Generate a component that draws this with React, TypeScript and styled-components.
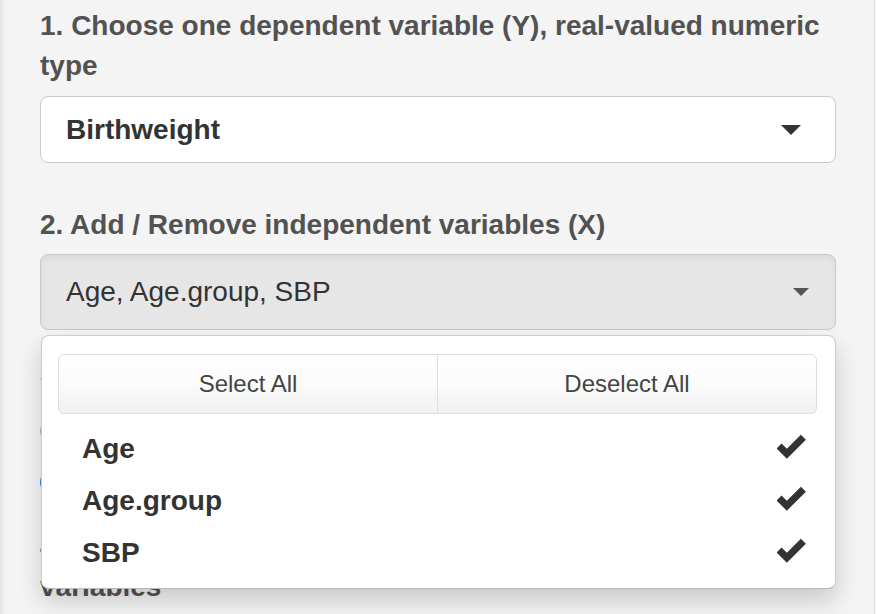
import React from "react";
import styled, { createGlobalStyle } from "styled-components";

const Global = createGlobalStyle`
  html, body { margin: 0; padding: 0; background: #f5f5f5; }
  body { font-family: "Liberation Sans", Arial, Helvetica, sans-serif; }
  * { box-sizing: border-box; }
`;

const Well = styled.div`
  width: 875px;
  height: 614px;
  overflow: hidden;
  background: #f4f4f4;
  border-left: 2px solid #e7e7e7;
  border-right: 1px solid #e2e2e2;
  box-shadow: inset 4px 0 4px -2px rgba(0, 0, 0, 0.04);
  padding: 6px 38px 0 38px;
`;

const FormGroup = styled.div<{ $mb: number }>`
  margin-bottom: ${(p) => p.$mb}px;
  position: relative;
`;

const Label = styled.div<{ $mb?: number }>`
  font-size: 28px;
  line-height: 40px;
  font-weight: 700;
  color: #525252;
  margin-bottom: ${(p) => p.$mb ?? 10}px;
`;

const SelectButton = styled.div<{ $open?: boolean; $h: number }>`
  height: ${(p) => p.$h}px;
  display: flex;
  align-items: center;
  justify-content: space-between;
  padding: 0 26px 0 25px;
  border: 1px solid ${(p) => (p.$open ? "#cacaca" : "#cbcbcb")};
  border-radius: 8px;
  background: ${(p) => (p.$open ? "#e6e6e6" : "#ffffff")};
  box-shadow: ${(p) => (p.$open ? "inset 0 3px 5px rgba(0,0,0,0.06)" : "none")};
  font-size: 28px;
  font-weight: ${(p) => (p.$open ? 400 : 700)};
  color: #333;
`;

const Caret = styled.span<{ $w: number; $h: number; $c: string; $r: number }>`
  width: 0;
  height: 0;
  border-left: ${(p) => p.$w / 2}px solid transparent;
  border-right: ${(p) => p.$w / 2}px solid transparent;
  border-top: ${(p) => p.$h}px solid ${(p) => p.$c};
  margin-right: ${(p) => p.$r}px;
`;

const Menu = styled.div`
  position: absolute;
  left: 1px;
  right: 0;
  top: calc(100% + 5px);
  z-index: 10;
  background: #fff;
  border: 1px solid rgba(0, 0, 0, 0.2);
  border-bottom-color: rgba(0, 0, 0, 0.28);
  border-radius: 8px;
  box-shadow: 0 12px 24px rgba(0, 0, 0, 0.175);
  padding: 10px 0;
`;

const ActionsBox = styled.div`
  padding: 8px 18px 8px 16px;
`;

const BtnGroup = styled.div`
  display: flex;
  height: 60px;
`;

const ActionBtn = styled.div<{ $first?: boolean }>`
  flex: 1;
  display: flex;
  align-items: center;
  justify-content: center;
  font-size: 24px;
  color: #444;
  background: linear-gradient(#ffffff 0%, #fbfbfb 50%, #f1f1f1 100%);
  border: 1px solid #dedede;
  border-left-width: ${(p) => (p.$first ? 1 : 0)}px;
  border-radius: ${(p) => (p.$first ? "6px 0 0 6px" : "0 6px 6px 0")};
`;

const Item = styled.div`
  position: relative;
  display: flex;
  align-items: center;
  justify-content: space-between;
  height: 52px;
  padding: 2px 30px 0 40px;
  font-size: 28px;
  font-weight: 700;
  color: #333;
`;

const Check = styled.svg`
  width: 29px;
  height: 25px;
  margin-top: -6px;
  margin-right: -1px;
`;

const RadioRow = styled.div`
  height: 51px;
  display: flex;
  align-items: center;
  gap: 12px;
  font-size: 28px;
  color: #333;
`;

const RadioDot = styled.span<{ $checked?: boolean }>`
  width: 26px;
  height: 26px;
  border-radius: 50%;
  flex: none;
  border: ${(p) => (p.$checked ? "8px solid #3478f6" : "1px solid #a5a5a5")};
  background: #fff;
`;

const items = ["Age", "Age.group", "SBP"];

export default function App() {
  return (
    <>
      <Global />
      <Well>
        <FormGroup $mb={42}>
          <Label>1. Choose one dependent variable (Y), real-valued numeric type</Label>
          <SelectButton $h={67}>
            <span>Birthweight</span>
            <Caret $w={20} $h={10} $c="#333" $r={8} />
          </SelectButton>
        </FormGroup>
        <FormGroup $mb={25}>
          <Label $mb={9}>2. Add / Remove independent variables (X)</Label>
          <SelectButton $open $h={76}>
            <span>Age, Age.group, SBP</span>
            <Caret $w={17} $h={8} $c="#555" $r={0} />
          </SelectButton>
          <Menu>
            <ActionsBox>
              <BtnGroup>
                <ActionBtn $first>Select All</ActionBtn>
                <ActionBtn>Deselect All</ActionBtn>
              </BtnGroup>
            </ActionsBox>
            {items.map((it) => (
              <Item key={it}>
                <span>{it}</span>
                <Check viewBox="0 0 28 24">
                  <polyline
                    points="2,11.5 9.5,19 25.5,3"
                    fill="none"
                    stroke="#333"
                    strokeWidth="6.8"
                    strokeLinecap="butt"
                    strokeLinejoin="miter"
                  />
                </Check>
              </Item>
            ))}
          </Menu>
        </FormGroup>
        <FormGroup $mb={20}>
          <Label>3. Include the intercept</Label>
          <RadioRow>
            <RadioDot />
            <span>No</span>
          </RadioRow>
          <RadioRow>
            <RadioDot $checked />
            <span>Yes</span>
          </RadioRow>
        </FormGroup>
        <FormGroup $mb={0}>
          <Label>4. Add / Remove interaction terms between independent variables</Label>
        </FormGroup>
      </Well>
    </>
  );
}
